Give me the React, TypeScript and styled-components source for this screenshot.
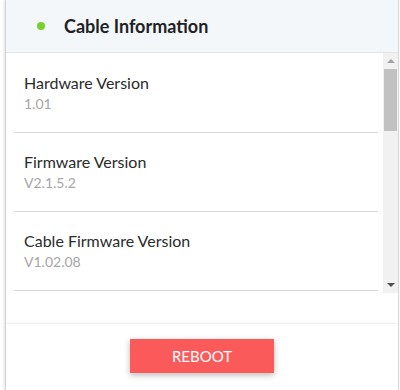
import styled, { createGlobalStyle } from "styled-components"

const GlobalStyle = createGlobalStyle`
  html, body {
    margin: 0;
    padding: 0;
    background: #ffffff;
    font-family: Lato, "Open Sans", "Liberation Sans", sans-serif;
  }
`

const Card = styled.div`
  width: 392px;
  height: 390px;
  margin-left: 5px;
  border-left: 1px solid #d4d4d4;
  border-right: 1px solid #d8d8d8;
  box-shadow: -1px 0 3px rgba(0, 0, 0, 0.12);
  display: flex;
  flex-direction: column;
  background: #fff;
  overflow: hidden;
`

const Header = styled.div`
  height: 52px;
  flex-shrink: 0;
  display: flex;
  align-items: center;
  gap: 19px;
  padding-left: 31px;
  background: #f3f7f9;
  border-bottom: 1px solid #e2e6e8;
`

const StatusDot = styled.span<{ $color: string }>`
  width: 8px;
  height: 8px;
  border-radius: 50%;
  background: ${(p) => p.$color};
`

const Title = styled.h2`
  margin: 0;
  font-size: 18px;
  font-weight: 700;
  color: #1f2224;
`

const Body = styled.div`
  height: 240px;
  flex-shrink: 0;
  margin-bottom: 30px;
  display: flex;
`

const List = styled.ul`
  list-style: none;
  flex: 1;
  margin: 0;
  padding: 1px 5px 0 8px;
  overflow: hidden;
`

const Item = styled.li`
  padding: 19px 0 19px 10px;
  border-bottom: 1px solid #d8d8d8;
`

const Label = styled.div`
  font-size: 16px;
  line-height: 20px;
  color: #2b2b2b;
`

const Value = styled.div`
  margin-top: 2px;
  font-size: 14px;
  line-height: 18px;
  color: #a6a6a6;
`

const ScrollBar = styled.div`
  width: 15px;
  display: flex;
  flex-direction: column;
  background: #f1f1f1;
`

const ScrollArrow = styled.div`
  height: 16px;
  display: flex;
  align-items: center;
  justify-content: center;
`

const ScrollTrack = styled.div`
  flex: 1;
  padding: 0 1px;
`

const ScrollThumb = styled.div`
  height: 62px;
  background: #c1c1c1;
`

function Arrow({ up, color }: { up?: boolean; color: string }) {
  return (
    <svg width="8" height="4" viewBox="0 0 8 4">
      <path d={up ? "M0 4 L4 0 L8 4 Z" : "M0 0 L8 0 L4 4 Z"} fill={color} />
    </svg>
  )
}

const Footer = styled.div`
  flex: 1;
  display: flex;
  justify-content: center;
  padding-top: 15px;
  border-top: 1px solid #f0f0f0;
  box-shadow: 0 -2px 3px rgba(0, 0, 0, 0.02);
`

const RebootButton = styled.button`
  width: 144px;
  height: 34px;
  border: none;
  background: #fa5a5a;
  color: #fff;
  font-family: inherit;
  font-size: 15px;
  box-shadow: 0 2px 6px rgba(0, 0, 0, 0.28);
  cursor: pointer;
`

const info = [
  { label: "Hardware Version", value: "1.01" },
  { label: "Firmware Version", value: "V2.1.5.2" },
  { label: "Cable Firmware Version", value: "V1.02.08" },
]

export default function App() {
  return (
    <>
      <GlobalStyle />
      <Card>
        <Header>
          <StatusDot $color="#78d12b" />
          <Title>Cable Information</Title>
        </Header>
        <Body>
          <List>
            {info.map((row) => (
              <Item key={row.label}>
                <Label>{row.label}</Label>
                <Value>{row.value}</Value>
              </Item>
            ))}
          </List>
          <ScrollBar>
            <ScrollArrow>
              <Arrow up color="#a3a3a3" />
            </ScrollArrow>
            <ScrollTrack>
              <ScrollThumb />
            </ScrollTrack>
            <ScrollArrow>
              <Arrow color="#505050" />
            </ScrollArrow>
          </ScrollBar>
        </Body>
        <Footer>
          <RebootButton>REBOOT</RebootButton>
        </Footer>
      </Card>
    </>
  )
}
